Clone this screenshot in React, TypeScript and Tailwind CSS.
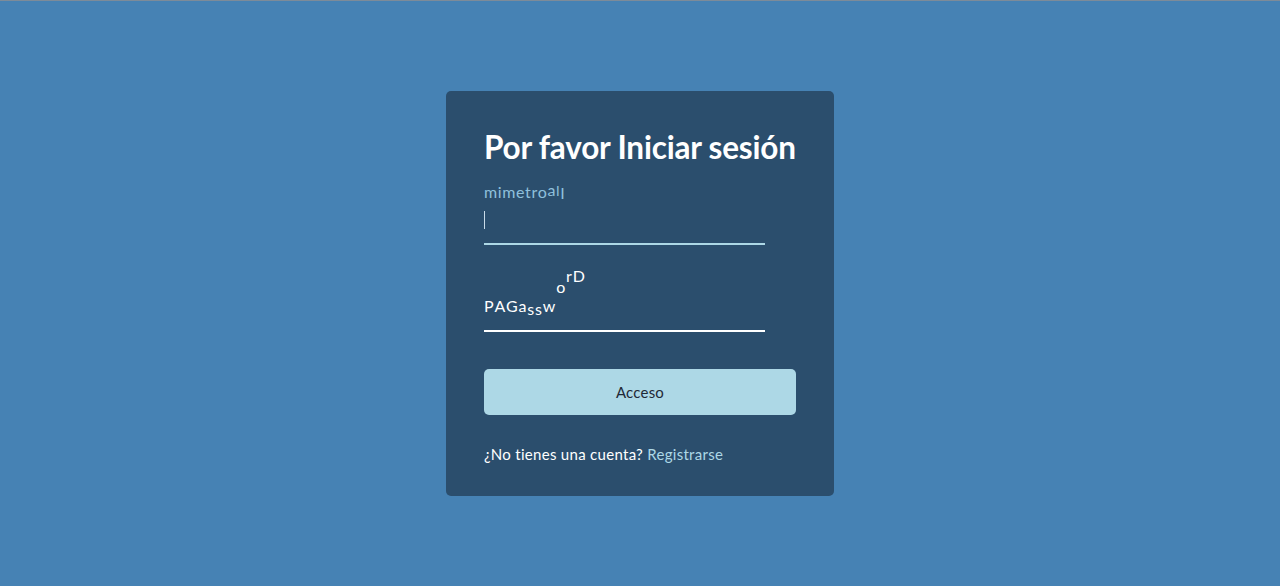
import React from "react";

const font = { fontFamily: "Lato, 'Noto Sans', sans-serif" };

function WaveLabel({ letters, className }: { letters: { ch: string; cls: string }[]; className: string }) {
  return (
    <span className={className}>
      {letters.map((l, i) => (
        <span key={i} className={"inline-block " + l.cls}>
          {l.ch}
        </span>
      ))}
    </span>
  );
}

export default function App() {
  const emailLetters = [
    { ch: "m", cls: "" },
    { ch: "i", cls: "" },
    { ch: "m", cls: "" },
    { ch: "e", cls: "" },
    { ch: "t", cls: "" },
    { ch: "r", cls: "" },
    { ch: "o", cls: "" },
    { ch: "a", cls: "-translate-y-[2px]" },
    { ch: "I", cls: "-translate-y-[2px] text-[13px]" },
    { ch: "I", cls: "translate-y-[1px]" },
  ];
  const passLetters = [
    { ch: "P", cls: "" },
    { ch: "A", cls: "" },
    { ch: "G", cls: "" },
    { ch: "a", cls: "" },
    { ch: "s", cls: "translate-y-[3px]" },
    { ch: "s", cls: "translate-y-[3px]" },
    { ch: "w", cls: "" },
    { ch: "o", cls: "-translate-y-[19px]" },
    { ch: "r", cls: "-translate-y-[30px]" },
    { ch: "D", cls: "-translate-y-[30px]" },
  ];

  return (
    <div className="min-h-[586px] w-full bg-[#4682b4] border-t border-[#7d8b99] flex justify-center pt-[90px]" style={font}>
      <div className="w-[388px] h-[405px] bg-[#2b4e6d] rounded-[5px] px-[38px] pt-[36px]">
        <h1 className="whitespace-nowrap text-[31.5px] leading-[40px] font-bold text-white tracking-[-0.2px]">Por favor Iniciar sesión</h1>

        <div className="mt-[15px] w-[281px]">
          <WaveLabel letters={emailLetters} className="block text-[16px] leading-[20px] tracking-[0.6px] text-[#8fc0dc]" />
          <div className="h-[42px] border-b-2 border-[#add8e6] pt-[8px]">
            <span className="block w-px h-[18px] bg-[#c9dbe8]"></span>
          </div>
        </div>

        <div className="mt-[44px] w-[281px] h-[43px] border-b-2 border-white relative">
          <WaveLabel letters={passLetters} className="absolute left-0 bottom-[14px] text-[16px] leading-[20px] tracking-[0.8px] text-white" />
        </div>

        <button className="mt-[37px] w-[312px] h-[46px] bg-[#add8e6] rounded-[5px] text-[15px] tracking-[0.2px] text-[#1f2937]">Acceso</button>

        <p className="mt-[28px] text-[15px] tracking-[0.3px] text-white">
          ¿No tienes una cuenta? <span className="text-[#add8e6]">Registrarse</span>
        </p>
      </div>
    </div>
  );
}
